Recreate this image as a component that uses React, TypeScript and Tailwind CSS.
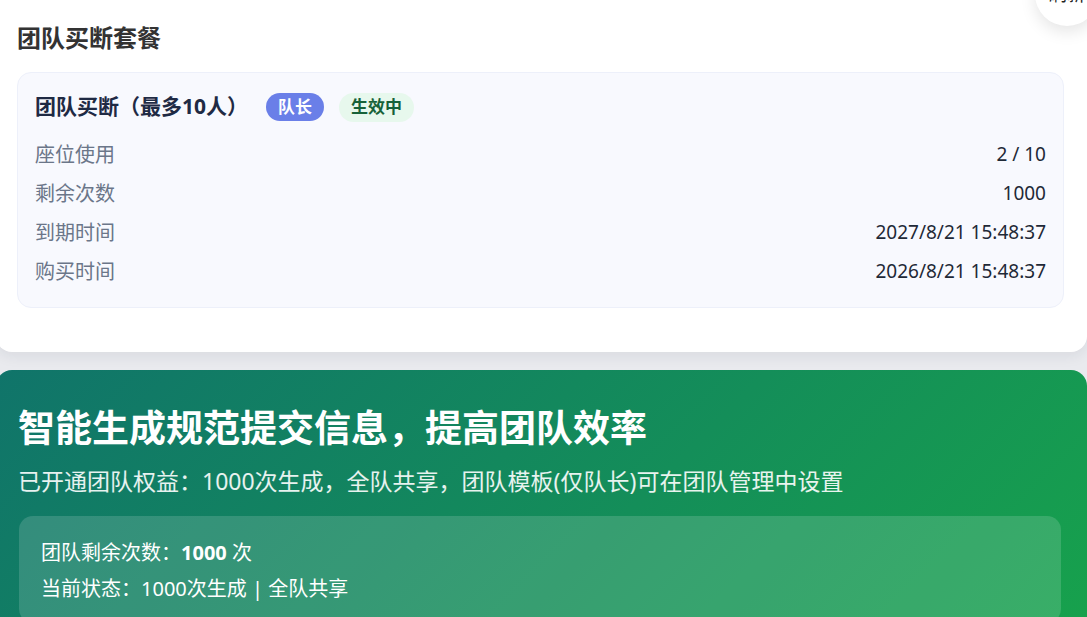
const plan = {
  name: '团队买断（最多10人）',
  rows: [
    { label: '座位使用', value: '2 / 10' },
    { label: '剩余次数', value: '1000' },
    { label: '到期时间', value: '2027/8/21 15:48:37' },
    { label: '购买时间', value: '2026/8/21 15:48:37' },
  ],
};

export default function App() {
  return (
    <div className="relative w-[1087px] h-[617px] overflow-hidden bg-[#e9eaee] font-['Noto_Sans','Noto_Sans_CJK_SC',sans-serif]">
      <div className="ml-[-4px] w-[1091px]">
        {/* 套餐信息 */}
        <div className="bg-white rounded-b-2xl shadow-[0_4px_14px_rgba(30,41,59,0.08)] pl-[21px] pr-[23px] pt-[22px] pb-[44px]">
          <h2 className="text-[24px] leading-8 font-bold text-[#333333]">团队买断套餐</h2>
          <div className="mt-[18px] rounded-[14px] border border-[#edf0fa] bg-[#f8f9fe] px-[17px] pt-[20px] pb-4">
            <div className="flex items-center h-[28px]">
              <span className="text-[21px] font-bold text-[#1f2a44]">{plan.name}</span>
              <span className="ml-[18px] h-[28px] px-[12px] rounded-full bg-[#6a7fe8] text-white text-[17px] font-bold flex items-center">队长</span>
              <span className="ml-[15px] h-[29px] px-[12px] rounded-full bg-[#e7f8ed] text-[#176239] text-[17px] font-bold flex items-center">生效中</span>
            </div>
            <div className="mt-[14px]">
              {plan.rows.map((r) => (
                <div key={r.label} className="flex items-center justify-between h-[39px]">
                  <span className="text-[20px] text-[#6b7689]">{r.label}</span>
                  <span className="text-[19px] text-[#1f2937]">{r.value}</span>
                </div>
              ))}
            </div>
          </div>
        </div>

        {/* 团队权益 */}
        <div className="mt-[18px] rounded-2xl bg-linear-[135deg] from-[#10746a] to-[#17a24c] pl-[23px] pr-[26px] pt-[34px] pb-6 text-white">
          <h1 className="-ml-px text-[37px] leading-[48px] font-bold">智能生成规范提交信息，提高团队效率</h1>
          <p className="-ml-px mt-[13px] text-[23px] leading-8 text-white/90">
            已开通团队权益：1000次生成，全队共享，团队模板(仅队长)可在团队管理中设置
          </p>
          <div className="mt-[19px] rounded-[14px] bg-white/15 px-[22px] pt-[19px] pb-4 text-[20px] leading-9">
            <div>
              团队剩余次数：<span className="font-bold">1000</span> 次
            </div>
            <div>当前状态：1000次生成 | 全队共享</div>
          </div>
        </div>
      </div>

      <button className="absolute left-[1035px] top-[-38px] w-[64px] h-[64px] rounded-full bg-white shadow-[0_6px_16px_rgba(0,0,0,0.10)] flex items-center justify-center text-[18px] text-[#222]">
        刷新
      </button>
    </div>
  );
}
